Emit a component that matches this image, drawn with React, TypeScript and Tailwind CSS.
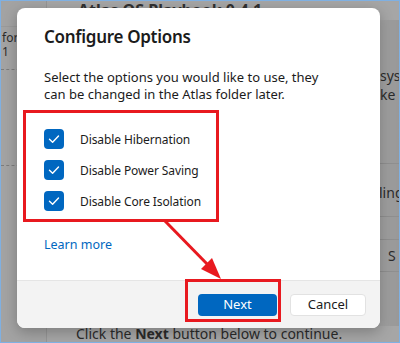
import React from "react";

const font = { fontFamily: '"Noto Sans", "Open Sans", sans-serif' };

function Check() {
  return (
    <span className="flex h-[20px] w-[20px] items-center justify-center rounded-[4px] bg-[#0067c0]">
      <svg width="12" height="12" viewBox="0 0 12 12" fill="none">
        <path d="M1.5 6.2 L4.6 9.2 L10.5 3" stroke="#fff" strokeWidth="1.4" strokeLinecap="round" strokeLinejoin="round" />
      </svg>
    </span>
  );
}

function Option({ label }: { label: string }) {
  return (
    <div className="flex h-[20px] items-center gap-[16px]">
      <Check />
      <span className="text-[12px] leading-[17px] tracking-[-0.1px] text-[#1b1b1b]">{label}</span>
    </div>
  );
}

export default function App() {
  return (
    <div
      className="relative h-[343px] w-[400px] overflow-hidden border border-[#7fb0e2] bg-[#a6a6a6]"
      style={font}
    >
      {/* app behind the dialog, dimmed */}
      <div className="flex h-full">
        <div className="flex w-[46px] flex-col border-r border-[#959595] bg-[#a3a3a3]">
          <div className="h-[26px] border-b border-[#9a9a9a]" />
          <div className="px-[1px] pt-[4px] text-[12px] leading-[14px] text-[#2b2b2b]">
            for
            <br />1
          </div>
          <div className="mt-[10px] border-t border-dashed border-[#7c7c7c]" />
          <div className="mt-[95px] border-t border-dashed border-[#7c7c7c]" />
        </div>
        <div className="flex flex-1 flex-col">
          <div className="-mt-[1px] pl-[31px] text-[16px] font-bold leading-[20px] text-[#303030]">
            Atlas OS Playbook 0.4.1
          </div>
          <div className="flex flex-1">
            <div className="flex-1" />
            <div className="flex w-[20px] flex-col overflow-hidden bg-gradient-to-r from-[#a2a2a2] to-[#989898] pt-[46px] text-[14px] leading-[19px] text-[#2b2b2b]">
              <span className="whitespace-nowrap pl-[1px]">syst</span>
              <span className="whitespace-nowrap pl-[1px]">ke</span>
              <div className="mt-[59px] h-[54px] whitespace-nowrap border-y border-[#8f8f8f] pt-[19px]">ling</div>
              <div className="mt-[22px] h-[33px] border-y border-[#8f8f8f] pl-[9px] pt-[6px]">S</div>
            </div>
          </div>
          <div className="h-[16px] whitespace-nowrap pl-[29px] text-[14px] leading-[16px] text-[#2b2b2b]">
            Click the <b>Next</b> button below to continue.
          </div>
        </div>
      </div>

      {/* dialog */}
      <div className="absolute left-[16px] top-[7px] flex h-[320px] w-[363px] flex-col overflow-hidden rounded-[8px] bg-white shadow-[0_4px_14px_rgba(0,0,0,0.25)]">
        <div className="flex flex-1 flex-col px-[27px] pt-[17px]">
          <h1 className="text-[17px] font-semibold leading-[24px] tracking-[-0.3px] text-[#1b1b1b]">Configure Options</h1>
          <p className="mt-[20px] text-[13px] leading-[17px] text-[#1b1b1b]">
            Select the options you would like to use, they
            <br />
            can be changed in the Atlas folder later.
          </p>
          <div className="mt-[26px] flex flex-col gap-[11px]">
            <Option label="Disable Hibernation" />
            <Option label="Disable Power Saving" />
            <Option label="Disable Core Isolation" />
          </div>
          <a className="mt-[25px] text-[12.5px] leading-[17px] text-[#0067c0]">Learn more</a>
        </div>
        <div className="flex h-[48px] items-start justify-end gap-[13px] border-t border-[#e5e5e5] bg-[#f3f3f3] pr-[14px] pt-[13px]">
          <button className="h-[22px] w-[79px] rounded-[4px] bg-[#0067c0] text-[13px] text-white">Next</button>
          <button className="h-[22px] w-[76px] rounded-[4px] border border-[#e2e2e2] bg-white text-[13px] text-[#1b1b1b]">
            Cancel
          </button>
        </div>
      </div>

      {/* annotations */}
      <div className="absolute left-[22px] top-[109px] h-[112px] w-[196px] border-[3px] border-[#e8191f]" />
      <div className="absolute left-[184px] top-[278px] h-[43px] w-[96px] border-[3px] border-[#e8191f]" />
      <svg className="absolute left-0 top-0" width="400" height="343">
        <line x1="164" y1="220" x2="209" y2="266" stroke="#e8191f" strokeWidth="3" />
        <polygon points="220,278 200,268 211,257" fill="#e8191f" />
      </svg>
    </div>
  );
}
